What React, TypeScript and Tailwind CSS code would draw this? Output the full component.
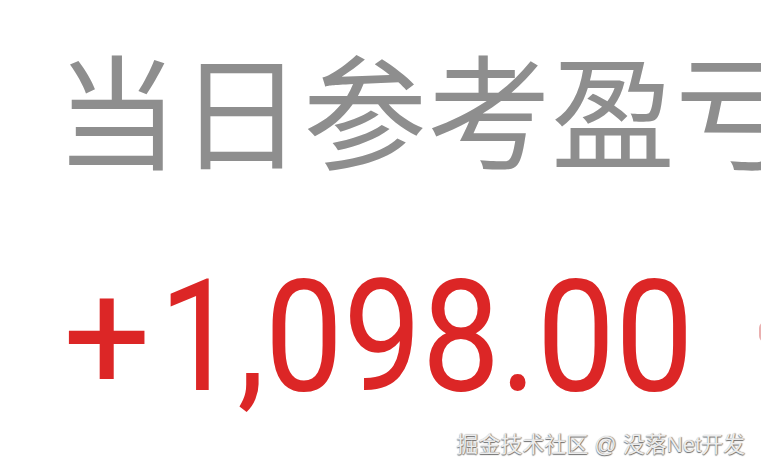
import React from 'react'

// 当日参考盈亏 card, cropped tight as in the screenshot
export default function App() {
  return (
    <div className="relative w-[761px] h-[471px] overflow-hidden bg-white">
      <div className="flex flex-col pt-[44px]">
        <h1
          className="pl-[55px] whitespace-nowrap text-[124px] leading-none font-normal text-[#8e8e8e]"
          style={{ fontFamily: '"Noto Sans CJK SC", "Noto Sans", sans-serif' }}
        >
          当日参考盈亏
        </h1>

        <div
          className="mt-[92px] pl-[63px] flex items-start whitespace-nowrap text-[155px] leading-none text-[#dc2626]"
          style={{ fontFamily: 'Roboto, "Liberation Sans", sans-serif' }}
        >
          <span className="mr-[8px]">+</span>
          <span className="origin-left scale-x-[0.9] tracking-[0px]">1,098.00</span>
        </div>
      </div>

      {/* edge of the next item, cut off by the frame */}
      <div className="absolute right-[-10px] top-[322px] h-[20px] w-[12px] rounded-full border-2 border-[#eab0b0]" />

      {/* watermark */}
      <div
        className="absolute right-[16px] bottom-[15px] text-[22px] leading-none text-[#ececec] [text-shadow:0_1px_1px_#6b6b6b,1px_0_1px_#8a8a8a]"
        style={{ fontFamily: '"Liberation Sans", "Noto Sans CJK SC", sans-serif' }}
      >
        掘金技术社区 @ 没落Net开发
      </div>
    </div>
  )
}
